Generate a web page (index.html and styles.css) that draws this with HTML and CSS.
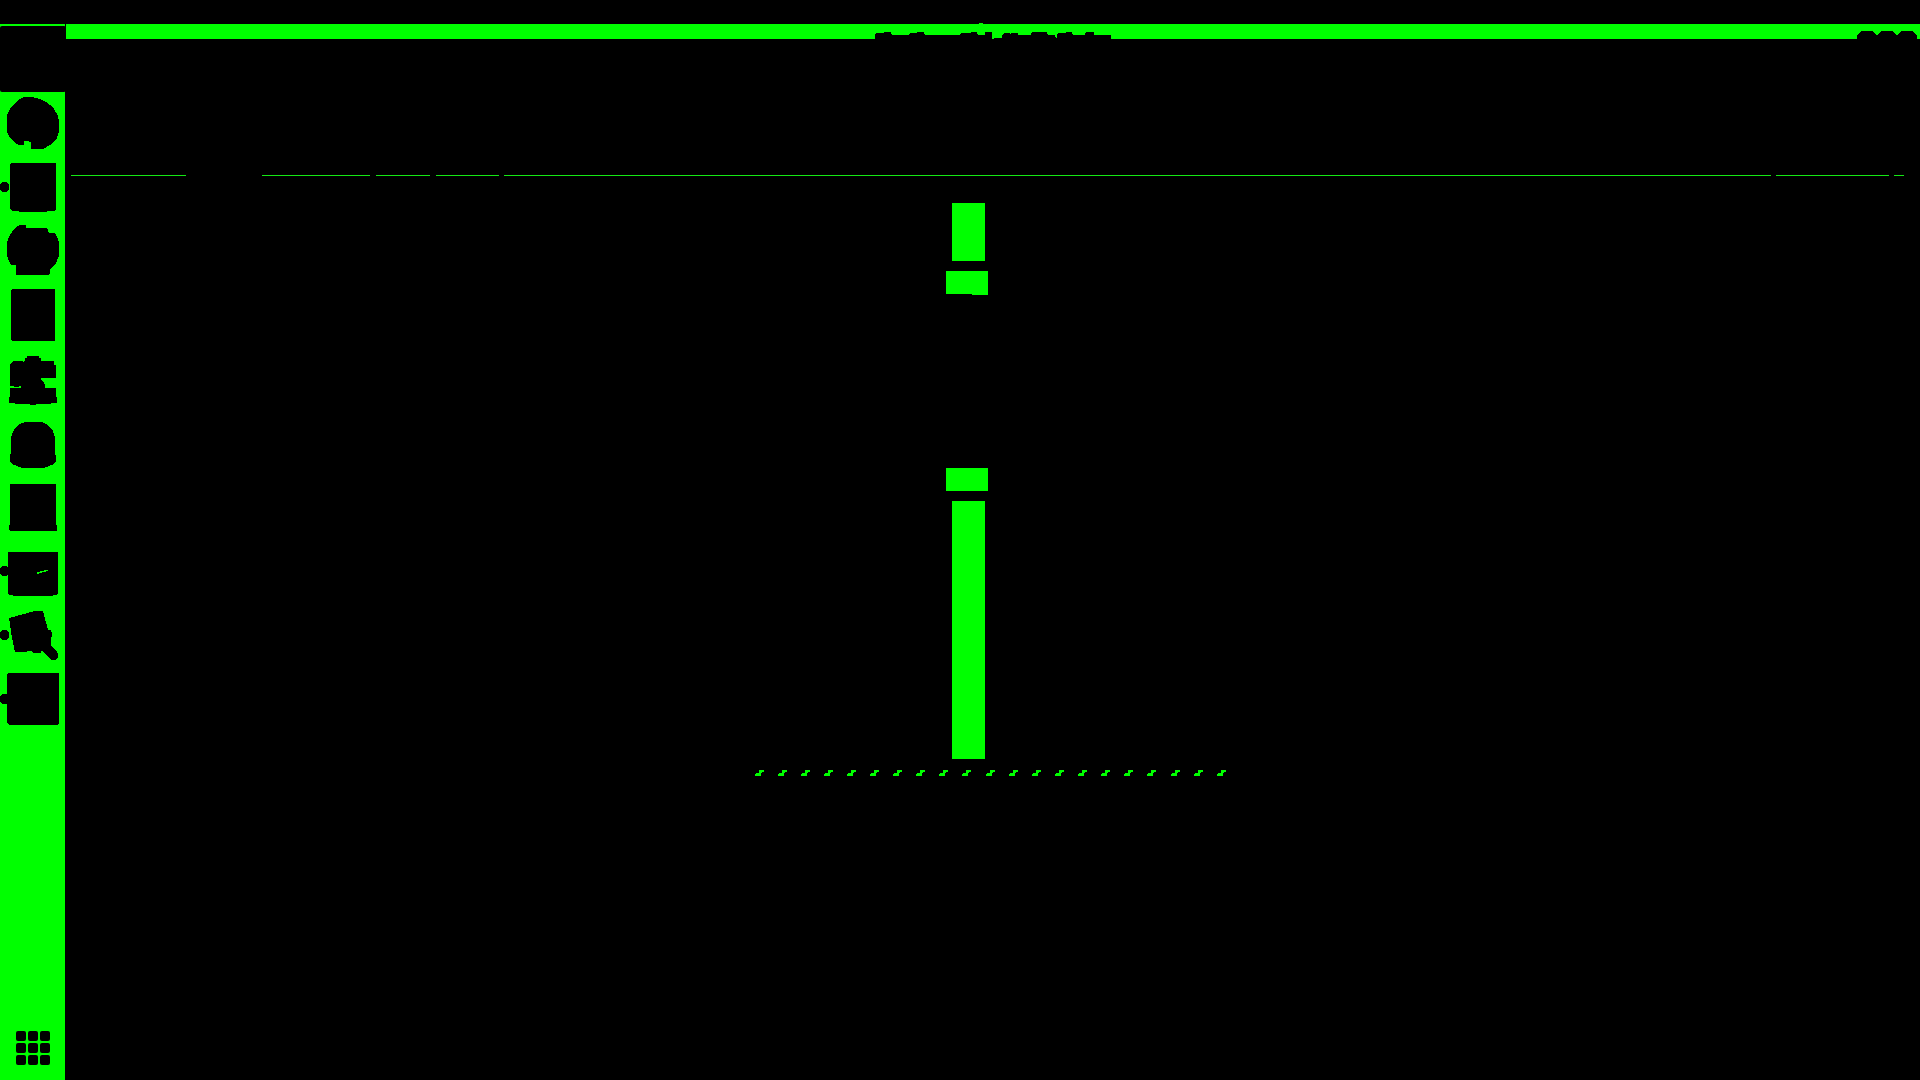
FILE: index.html
```
<!DOCTYPE html>
<html lang="en">
<head>
<meta charset="utf-8">
<meta name="viewport" content="width=device-width, initial-scale=1">
<title>Desktop</title>
<link rel="stylesheet" href="styles.css">
</head>
<body>
<div class="desktop">
  <header class="top-panel"></header>
  <div class="workspace">
    <nav class="dock" aria-label="Dock">
      <div class="dock-head"><div class="dock-active"></div></div>
      <div class="dock-items">
        <button class="dock-item" type="button" aria-label="Item 1"><svg viewBox="0 0 65 64"><path d="M24 5H32L40 7L46 10L50 13L54 17L58 24L59 29V40L57 46L54 50L50 53L45 56L42 57H31V50H29L28 49H24V53H19L14 50L10 46L8 42L7 39V23L10 17L15 11L20 7Z"/></svg></button>
        <button class="dock-item" type="button" aria-label="Item 2"><svg viewBox="0 0 65 64"><path d="M0 28L3 26H6L9 29V33L6 36H3L0 34ZM11 7H55L56 8V53L54 55H47V56H19V55H12L10 53V8Z"/></svg></button>
        <button class="dock-item" type="button" aria-label="Item 3"><svg viewBox="0 0 65 64"><path d="M20 5H26V8H46L48 10L49 13H55L57 17L59 22V36L56 43L50 50V53L49 55H16V45H11L9 41L7 35V22L10 15L15 8Z"/></svg></button>
        <button class="dock-item" type="button" aria-label="Item 4"><svg viewBox="0 0 65 64"><path d="M12 5H54L55 6V56L54 57H12L11 56V6Z"/></svg></button>
        <button class="dock-item" type="button" aria-label="Item 5"><svg viewBox="0 0 65 64"><path d="M27 8H39V10H41V13H54V17H56V30H41V32L44 34L45 37V40H56V49H57V55H51V56H36V57H30V56H15V55H9V49H10V40H21V38H19V39H14V38H10V16L13 13H23V14H24V13H25V10H27Z"/></svg></button>
        <button class="dock-item" type="button" aria-label="Item 6"><svg viewBox="0 0 65 64"><path d="M25 10H42L48 13L53 19L55 25V41L56 44V49L54 52L44 56H22L12 52L10 49V44L11 41V25L14 18L18 13Z"/></svg></button>
        <button class="dock-item" type="button" aria-label="Item 7"><svg viewBox="0 0 65 64"><path d="M10 8H56V49H57V54L56 55H10L9 54V49H10Z"/></svg></button>
        <button class="dock-item" type="button" aria-label="Item 8"><svg viewBox="0 0 65 64"><path d="M0 28L3 26H6L8 28V12H58V54L56 55H53V56H13V55H10L8 54V34L6 36H3L0 34Z"/><path class="accent" d="M37 32H40V31H44V30H48V31H46V32H42V33H39V34H37Z"/></svg></button>
        <button class="dock-item" type="button" aria-label="Item 9"><svg viewBox="0 0 65 64"><path d="M0 28L3 26H6L9 29V33L6 36H3L0 34ZM9 14L35 7H43L48 26H51L52 29V33H51V42L57 48L58 50V54L55 56H51L43 47H41V49H34L31 47H27V48H15L12 34Z"/></svg></button>
        <button class="dock-item" type="button" aria-label="Item 10"><svg viewBox="0 0 65 64"><path d="M0 28L3 26H7V6L8 5H58L59 6V55L57 57H9L7 55V36H3L0 34Z"/></svg></button>
      </div>
      <button class="dock-apps" type="button" aria-label="Show applications">
        <span></span><span></span><span></span><span></span><span></span><span></span><span></span><span></span><span></span>
      </button>
    </nav>
    <main class="window">
      <div class="title-bar">
        <svg class="title-mark" viewBox="0 0 236 15"><path class="accent" d="M104 -1H108V0H104Z"/><path d="M0 15V10L1 9H9V8H16V10L17 11H34V10L35 9H42V8H49V10L50 11H85V10L86 9H96V8H102V10L103 11H110V8H117V15H119V14H127V12L128 10L129 9H135V10H136V9H143V11H156V9L157 8H172V10L173 11H180V13L181 14H182V10L183 9H191V8H197V10L198 11H210V10L211 8H219V11H236V15Z"/></svg>
        <svg class="window-controls" viewBox="0 0 60 15"><path d="M0 15V12L4 7H16L20 12L24 7H36L40 12L44 7H56L60 12V15Z"/></svg>
      </div>
      <div class="toolbar"></div>
      <div class="rule">
        <i class="rule-a"></i><i class="rule-b"></i><i class="rule-c"></i><i class="rule-d"></i><i class="rule-fill"></i><i class="rule-e"></i><i class="rule-f"></i>
      </div>
      <div class="content">
        <div class="column">
          <div class="bar bar-short"></div>
          <div class="block block-step"></div>
          <div class="block"></div>
          <div class="bar bar-tall"></div>
        </div>
        <svg class="ticks" viewBox="0 0 476 6">
          <defs><path id="tick" class="accent" d="M4 0H9V2H7V3H6V6H0V4H1V3H4Z"/></defs>
          <use href="#tick"/><use href="#tick" x="23"/><use href="#tick" x="46"/><use href="#tick" x="69"/><use href="#tick" x="92"/><use href="#tick" x="115"/><use href="#tick" x="138"/><use href="#tick" x="161"/><use href="#tick" x="184"/><use href="#tick" x="207"/><use href="#tick" x="231"/><use href="#tick" x="254"/><use href="#tick" x="277"/><use href="#tick" x="300"/><use href="#tick" x="323"/><use href="#tick" x="346"/><use href="#tick" x="369"/><use href="#tick" x="392"/><use href="#tick" x="416"/><use href="#tick" x="439"/><use href="#tick" x="462"/>
        </svg>
      </div>
    </main>
  </div>
</div>
</body>
</html>
```
FILE: styles.css
```
:root {
  --green: #00ff00;
  --line: #14e814;
}

* {
  box-sizing: border-box;
}

body {
  margin: 0;
  background: #000;
  font-family: "Liberation Sans", sans-serif;
}

svg {
  display: block;
  fill: #000;
  overflow: visible;
  shape-rendering: crispEdges;
}

.accent {
  fill: var(--green);
}

button {
  padding: 0;
  border: 0;
  background: none;
}

.desktop {
  display: flex;
  flex-direction: column;
  min-height: 100vh;
}

.top-panel {
  height: 24px;
}

.workspace {
  flex: 1;
  display: grid;
  grid-template-columns: 66px 1fr;
}

/* Dock */
.dock {
  display: flex;
  flex-direction: column;
  background: linear-gradient(to right, var(--green) 65px, #000 65px);
}

.dock-head {
  padding-top: 2px;
  background: linear-gradient(to right, var(--green) 65px, #000 65px);
}

.dock-active {
  height: 66px;
  background: #000;
  border-radius: 2px;
}

.dock-items {
  display: flex;
  flex-direction: column;
  width: 65px;
}

.dock-item {
  height: 64px;
}

.dock-item svg {
  width: 65px;
  height: 64px;
}

.dock-apps {
  display: grid;
  grid-template-columns: repeat(3, 10px);
  gap: 2px;
  margin: auto 16px 15px;
}

.dock-apps span {
  height: 10px;
  background: #000;
  border-radius: 2px;
}

/* Window */
.window {
  display: flex;
  flex-direction: column;
}

.title-bar {
  display: grid;
  grid-template-columns: 1fr auto 1fr;
  height: 15px;
  background: var(--green);
}

.title-mark {
  grid-column: 2;
  width: 236px;
  height: 15px;
}

.window-controls {
  justify-self: end;
  width: 60px;
  height: 15px;
  margin-right: 3px;
}

.toolbar {
  height: 136px;
}

.rule {
  display: flex;
  gap: 5px;
  height: 1px;
  padding: 0 16px 0 5px;
}

.rule i {
  background: var(--line);
}

.rule-a { width: 115px; }
.rule-b { width: 108px; margin-left: 71px; }
.rule-c { width: 54px; margin-left: 1px; }
.rule-d { width: 63px; margin-left: 1px; }
.rule-fill { flex: 1; }
.rule-e { width: 113px; }
.rule-f { width: 10px; }

.content {
  align-self: center;
  width: 476px;
  padding-top: 27px;
}

.column {
  display: flex;
  flex-direction: column;
  gap: 10px;
  width: 42px;
  margin-left: 191px;
}

.bar {
  width: 33px;
  margin-left: 6px;
  background: var(--green);
}

.bar-short { height: 58px; }
.bar-tall { height: 258px; }

.block {
  width: 42px;
  height: 23px;
  background: var(--green);
}

.block-step {
  height: 24px;
  margin-bottom: 163px;
  clip-path: polygon(0 0, 100% 0, 100% 100%, 26px 100%, 26px 23px, 0 23px);
}

.ticks {
  width: 476px;
  height: 6px;
  margin-top: 11px;
}
```
